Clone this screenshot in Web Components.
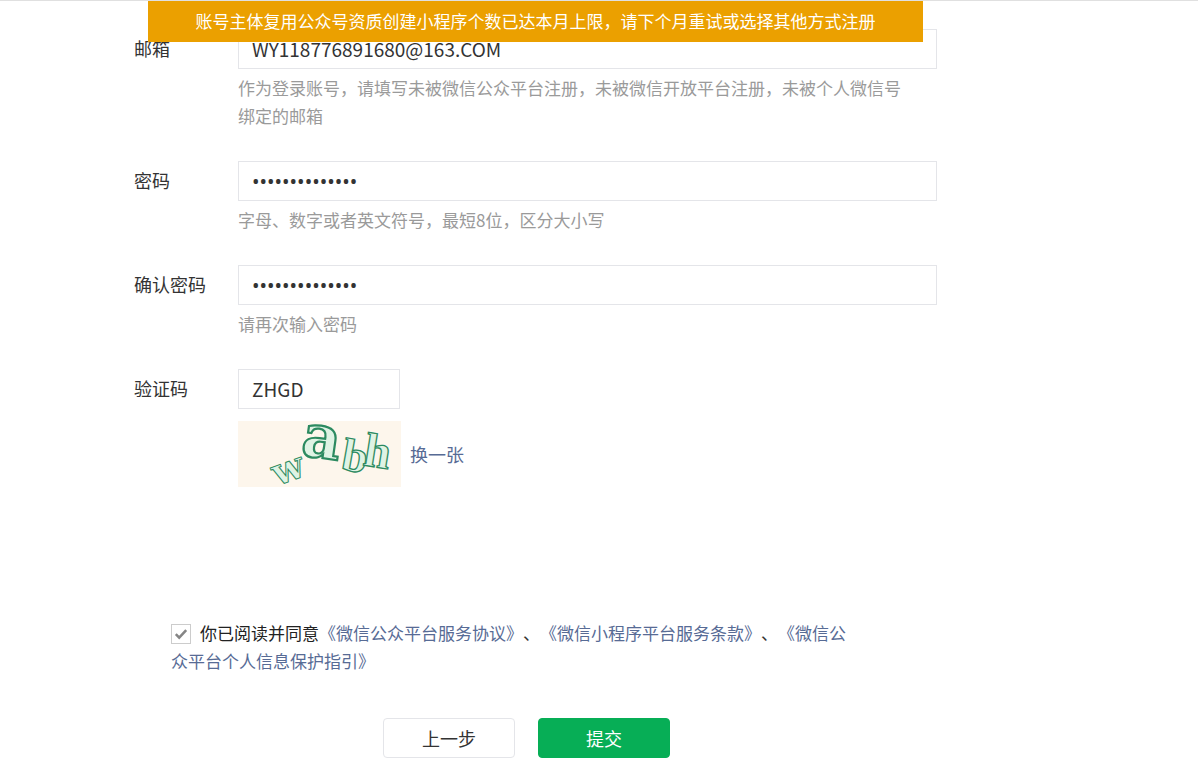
<!DOCTYPE html>
<html lang="zh-CN">
<head>
<meta charset="utf-8">
<meta name="viewport" content="width=device-width, initial-scale=1">
<title>小程序注册</title>
<style>
  html {
    --line: #e4e5e9;
    --text: #333;
    --hint: #9a9a9a;
    --link: #576b95;
    --green: #07ae56;
  }
  body {
    margin: 0;
    background: #fff;
    color: var(--text);
    font: 17px/28px "Noto Sans CJK SC", sans-serif;
    text-spacing-trim: space-all;
  }
</style>
</head>
<body>
<register-page>
  <notice-bar slot="notice">账号主体复用公众号资质创建小程序个数已达本月上限，请下个月重试或选择其他方式注册</notice-bar>
  <form-field label="邮箱" type="email" value="WY118776891680@163.COM">作为登录账号，请填写未被微信公众平台注册，未被微信开放平台注册，未被个人微信号绑定的邮箱</form-field>
  <form-field label="密码" type="password" value="wechat-program">字母、数字或者英文符号，最短8位，区分大小写</form-field>
  <form-field label="确认密码" type="password" value="wechat-program">请再次输入密码</form-field>
  <captcha-field label="验证码" value="ZHGD"></captcha-field>
  <agreement-box slot="footer"></agreement-box>
  <form-actions slot="footer"></form-actions>
</register-page>

<script>
const fieldStyles = `
  :host { display: grid; grid-template-columns: 104px minmax(0, 1fr); }
  label { font-size: 18px; line-height: 38px; }
  input {
    display: block; box-sizing: border-box; width: 100%; height: 40px;
    margin: 0; padding: 0 13px 2px; border: 1px solid var(--line);
    background: #fff; color: var(--text); outline: none;
    font: 19px/28px "Noto Sans CJK SC", sans-serif;
  }`;

function define(name, html, setup) {
  const template = document.createElement('template');
  template.innerHTML = html;
  customElements.define(name, class extends HTMLElement {
    constructor() {
      super();
      this.attachShadow({ mode: 'open' }).append(template.content.cloneNode(true));
    }
    connectedCallback() {
      if (setup) setup(this, this.shadowRoot);
    }
  });
}

function fillField(host, root) {
  const input = root.querySelector('input');
  root.querySelector('label').textContent = host.getAttribute('label');
  input.type = host.getAttribute('type') || 'text';
  input.value = host.getAttribute('value') || '';
}

define('register-page', `
  <style>
    :host { display: block; border-top: 1px solid #e0e0e0; padding-left: 134px; }
    main { position: relative; max-width: 803px; padding-top: 28px; }
    .fields { display: grid; gap: 31px; }
    footer { display: grid; gap: 43px; padding: 132px 18px 1px 0; }
  </style>
  <main>
    <slot name="notice"></slot>
    <div class="fields"><slot></slot></div>
    <footer><slot name="footer"></slot></footer>
  </main>`);

define('notice-bar', `
  <style>
    :host {
      position: absolute; top: 0; left: 14px; right: 14px; z-index: 1;
      box-sizing: border-box; padding: 6px 14px 7px;
      background: #eba000; color: #fff; text-align: center;
    }
  </style>
  <slot></slot>`, host => host.setAttribute('role', 'alert'));

define('form-field', `
  <style>
    ${fieldStyles}
    input[type="password"] { padding-bottom: 0; font: 20px/28px "Noto Sans", sans-serif; }
    p { margin: 5px 0 0; padding-right: 28px; color: var(--hint); }
  </style>
  <label for="field"></label>
  <div>
    <input id="field" aria-describedby="hint">
    <p id="hint"><slot></slot></p>
  </div>`, fillField);

define('captcha-field', `
  <style>
    ${fieldStyles}
    input { width: 162px; }
    .picture { display: flex; align-items: center; gap: 9px; margin-top: 12px; }
    a { color: var(--link); font-size: 18px; text-decoration: none; }
    svg { display: block; overflow: visible; }
    text {
      font-family: "Liberation Serif", serif; font-weight: bold;
      fill: #dff3e4; stroke: #2c8a60; stroke-width: 1.3;
    }
    .wide { font-family: "DejaVu Serif", serif; }
  </style>
  <label for="code"></label>
  <div>
    <input id="code" autocomplete="off">
    <div class="picture">
      <svg width="163" height="66" viewBox="0 0 163 66" role="img" aria-label="验证码图片">
        <rect width="163" height="66" fill="#fdf6ec"/>
        <text class="wide" transform="translate(39 65) rotate(-20)" font-size="37" style="stroke-width:1">w</text>
        <text class="wide" transform="translate(62 34) rotate(8)" font-size="60" style="stroke-width:2.2">a</text>
        <text transform="translate(102 48) rotate(10)" font-size="46">b</text>
        <text transform="translate(124 44) rotate(9)" font-size="48">h</text>
      </svg>
      <a href="#captcha">换一张</a>
    </div>
  </div>`, fillField);

define('agreement-box', `
  <style>
    :host { display: block; padding: 0 60px 0 37px; }
    input {
      appearance: none; width: 20px; height: 20px; margin: 0 9px 0 0;
      border: 1px solid #ccc; vertical-align: -4px; box-sizing: border-box;
      background: #fff url("data:image/svg+xml,%3Csvg xmlns='http://www.w3.org/2000/svg' viewBox='0 0 18 18'%3E%3Cpath d='M3.8 9.2l3.4 3.5 7-7.5' fill='none' stroke='%23858585' stroke-width='2.5'/%3E%3C/svg%3E") center / 18px;
    }
    input:not(:checked) { background-image: none; }
    label { color: #222; }
    a { color: var(--link); text-decoration: none; }
  </style>
  <input type="checkbox" id="agree" checked><label for="agree">你已阅读并同意</label><a href="#service">《微信公众平台服务协议》</a>、<a href="#program">《微信小程序平台服务条款》</a>、<a href="#privacy">《微信公众平台个人信息保护指引》</a>`);

define('form-actions', `
  <style>
    :host { display: flex; justify-content: center; gap: 23px; }
    button {
      box-sizing: border-box; width: 132px; height: 40px; padding: 0 0 1px;
      border: 1px solid var(--line); border-radius: 4px;
      background: #fff; color: var(--text);
      font: 18px/28px "Noto Sans CJK SC", sans-serif;
    }
    .primary { border-color: var(--green); background: var(--green); color: #fff; }
  </style>
  <button type="button">上一步</button>
  <button type="submit" class="primary">提交</button>`);
</script>
</body>
</html>
